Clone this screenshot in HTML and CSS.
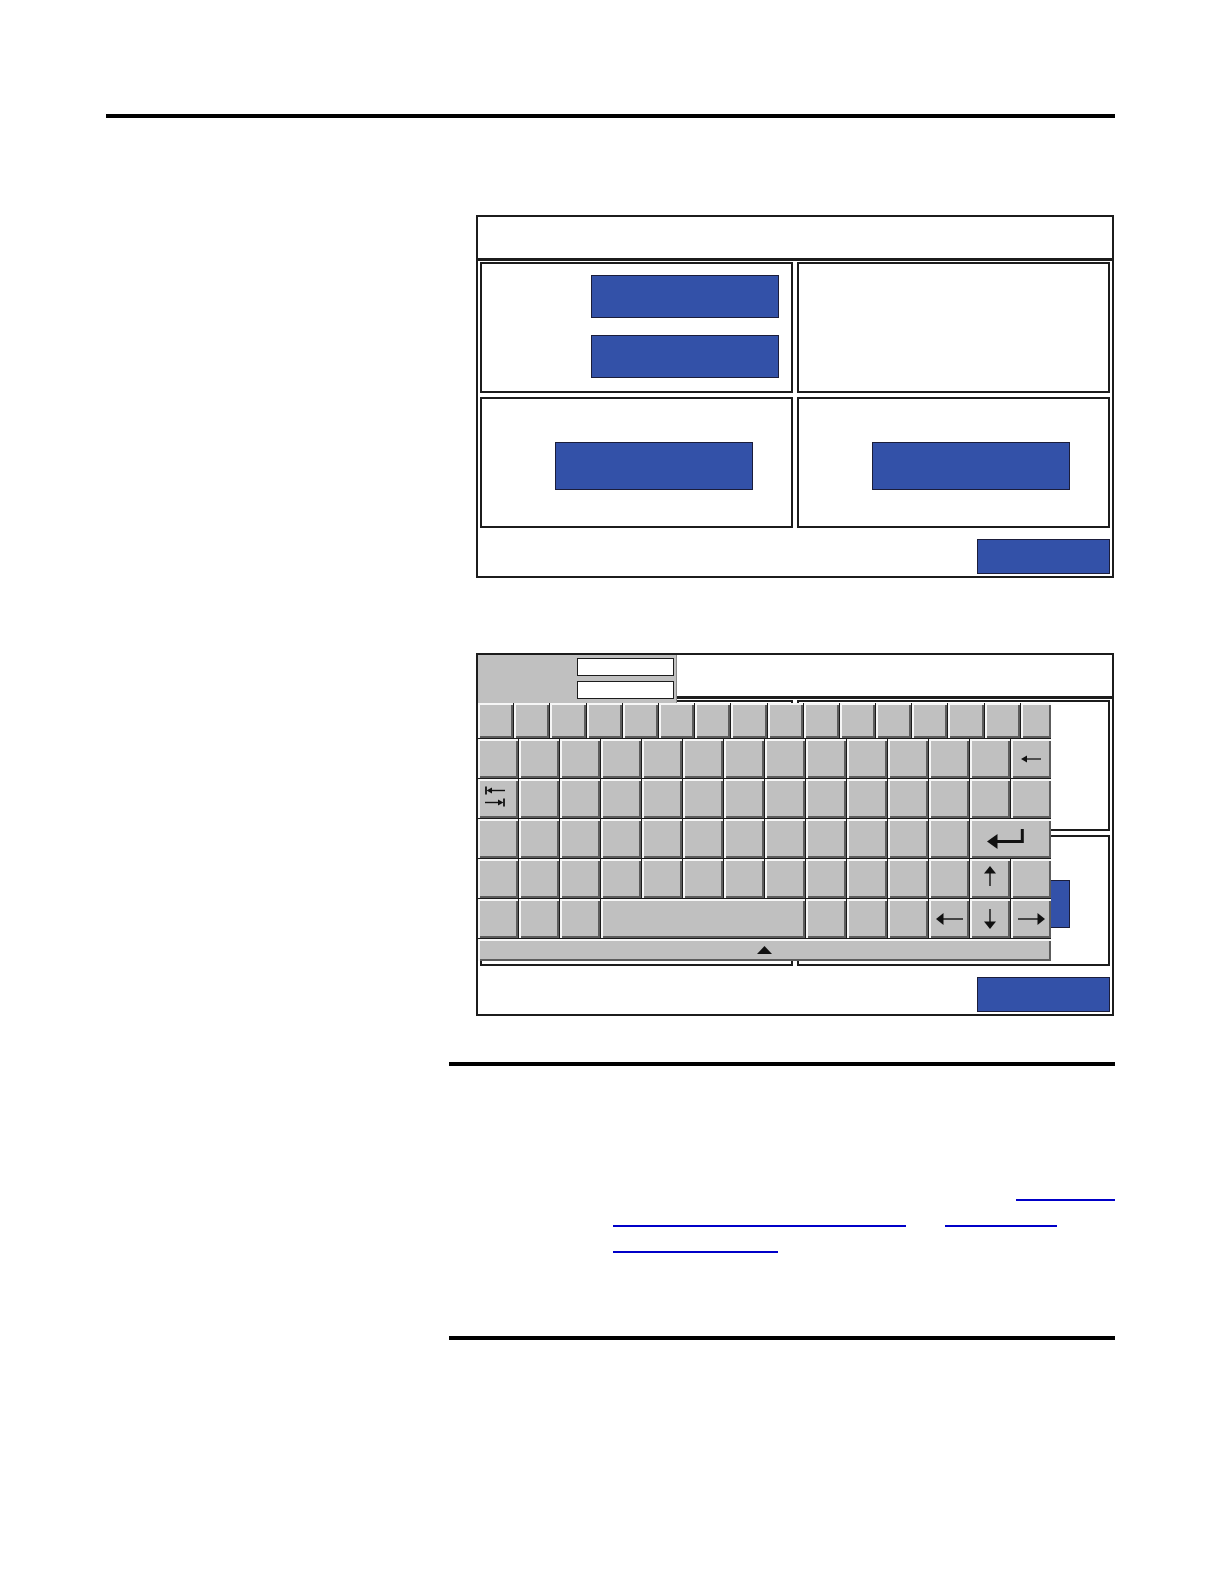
FILE: index.html
```html
<!DOCTYPE html>
<html lang="en">
<head>
<meta charset="utf-8">
<title>Keypad screens</title>
<link rel="stylesheet" href="styles.css">
</head>
<body>
<div class="page">
  <div class="rule rule-top"></div>

  <div class="figs">
    <div class="panel fig1">
      <div class="panel-head"></div>
      <div class="quads">
        <div class="quad q-tl"><div class="btn btn-a"></div><div class="btn btn-a"></div></div>
        <div class="quad q-tr"></div>
        <div class="quad q-bl"><div class="btn btn-b"></div></div>
        <div class="quad q-br"><div class="btn btn-b"></div></div>
      </div>
      <div class="panel-foot"><div class="btn btn-c"></div></div>
    </div>

    <div class="panel fig2">
      <div class="panel-head"></div>
      <div class="quads">
        <div class="quad q-tl"><div class="btn btn-a"></div><div class="btn btn-a"></div></div>
        <div class="quad q-tr"></div>
        <div class="quad q-bl"><div class="btn btn-b"></div></div>
        <div class="quad q-br"><div class="btn btn-b"></div></div>
      </div>
      <div class="panel-foot"><div class="btn btn-c"></div></div>

      <div class="kb-head">
        <div class="kb-input"></div>
        <div class="kb-input"></div>
      </div>

      <div class="kb">
        <div class="kb-row row-top">
          <div class="key"></div><div class="key"></div><div class="key"></div><div class="key"></div>
          <div class="key"></div><div class="key"></div><div class="key"></div><div class="key"></div>
          <div class="key"></div><div class="key"></div><div class="key"></div><div class="key"></div>
          <div class="key"></div><div class="key"></div><div class="key"></div><div class="key"></div>
        </div>
        <div class="kb-row row-main">
          <div class="key"></div><div class="key"></div><div class="key"></div><div class="key"></div>
          <div class="key"></div><div class="key"></div><div class="key"></div><div class="key"></div>
          <div class="key"></div><div class="key"></div><div class="key"></div><div class="key"></div>
          <div class="key"></div>
          <div class="key key-icon">
            <svg width="20" height="8" viewBox="0 0 20 8"><line x1="5" y1="4" x2="20" y2="4" stroke="#111" stroke-width="1.3"/><polygon points="0,4 6,0.6 6,7.4" fill="#111"/></svg>
          </div>
        </div>
        <div class="kb-row row-main">
          <div class="key key-tab">
            <svg width="20" height="21" viewBox="0 0 20 21"><line x1="1" y1="0.5" x2="1" y2="8.5" stroke="#111" stroke-width="1.8"/><polygon points="1.5,4.5 7,1.5 7,7.5" fill="#111"/><line x1="6" y1="4.5" x2="20" y2="4.5" stroke="#111" stroke-width="1.4"/><line x1="0" y1="16.5" x2="14" y2="16.5" stroke="#111" stroke-width="1.4"/><polygon points="18.5,16.5 13,13.5 13,19.5" fill="#111"/><line x1="19" y1="12.5" x2="19" y2="20.5" stroke="#111" stroke-width="1.8"/></svg>
          </div>
          <div class="key"></div><div class="key"></div><div class="key"></div><div class="key"></div>
          <div class="key"></div><div class="key"></div><div class="key"></div><div class="key"></div>
          <div class="key"></div><div class="key"></div><div class="key"></div><div class="key"></div>
          <div class="key"></div>
        </div>
        <div class="kb-row row-main">
          <div class="key"></div><div class="key"></div><div class="key"></div><div class="key"></div>
          <div class="key"></div><div class="key"></div><div class="key"></div><div class="key"></div>
          <div class="key"></div><div class="key"></div><div class="key"></div><div class="key"></div>
          <div class="key key-enter">
            <svg width="37" height="21" viewBox="0 0 37 21"><polyline points="35.3,0 35.3,12.5 8,12.5" fill="none" stroke="#111" stroke-width="3"/><polygon points="0,12.5 10.5,5 10.5,20" fill="#111"/></svg>
          </div>
        </div>
        <div class="kb-row row-main">
          <div class="key"></div><div class="key"></div><div class="key"></div><div class="key"></div>
          <div class="key"></div><div class="key"></div><div class="key"></div><div class="key"></div>
          <div class="key"></div><div class="key"></div><div class="key"></div><div class="key"></div>
          <div class="key key-up">
            <svg width="12" height="20" viewBox="0 0 12 20"><polygon points="6,0 0,7.5 12,7.5" fill="#111"/><line x1="6" y1="6" x2="6" y2="20" stroke="#111" stroke-width="1.4"/></svg>
          </div>
          <div class="key"></div>
        </div>
        <div class="kb-row row-main">
          <div class="key"></div><div class="key"></div><div class="key"></div>
          <div class="key key-space"></div>
          <div class="key"></div><div class="key"></div><div class="key"></div>
          <div class="key key-icon">
            <svg width="27" height="12" viewBox="0 0 27 12"><polygon points="0,6 7.5,0 7.5,12" fill="#111"/><line x1="6" y1="6" x2="27" y2="6" stroke="#111" stroke-width="1.4"/></svg>
          </div>
          <div class="key key-icon">
            <svg width="12" height="20" viewBox="0 0 12 20"><line x1="6" y1="0" x2="6" y2="14" stroke="#111" stroke-width="1.4"/><polygon points="0,12.5 12,12.5 6,20" fill="#111"/></svg>
          </div>
          <div class="key key-icon">
            <svg width="27" height="12" viewBox="0 0 27 12"><line x1="0" y1="6" x2="21" y2="6" stroke="#111" stroke-width="1.4"/><polygon points="27,6 19.5,0 19.5,12" fill="#111"/></svg>
          </div>
        </div>
        <div class="kb-bar">
          <svg width="15" height="8" viewBox="0 0 15 8"><polygon points="7.5,0 15,8 0,8" fill="#111"/></svg>
        </div>
      </div>
    </div>
  </div>

  <div class="rule rule-mid"></div>

  <div class="note">
    <div class="note-line line-end"><a class="xref xref-1" href="#"></a></div>
    <div class="note-line"><a class="xref xref-2" href="#"></a><a class="xref xref-3" href="#"></a></div>
    <div class="note-line"><a class="xref xref-4" href="#"></a></div>
  </div>

  <div class="rule rule-bot"></div>
</div>
</body>
</html>
```

FILE: styles.css
```css
* { box-sizing: border-box; }

body {
  margin: 0;
  background: #ffffff;
  font-family: "Liberation Sans", Arial, sans-serif;
}

.page {
  width: 1224px;
  padding-top: 114px;
  padding-bottom: 40px;
}

.rule {
  height: 4px;
  background: #000000;
}

.rule-top {
  margin-left: 106px;
  width: 1009px;
}

.rule-mid {
  margin-top: 46px;
  margin-left: 449px;
  width: 666px;
}

.rule-bot {
  margin-top: 83px;
  margin-left: 449px;
  width: 666px;
}

.figs {
  margin-left: 476px;
  width: 638px;
}

/* ---------- panel ---------- */
.panel {
  position: relative;
  width: 638px;
  height: 363px;
  border: 2px solid #1c1c1c;
  display: flex;
  flex-direction: column;
  background: #ffffff;
}

.fig1 { margin-top: 97px; }
.fig2 { margin-top: 75px; }

.panel-head {
  height: 44px;
  border-bottom: 3px solid #1c1c1c;
  flex: none;
}

.quads {
  display: grid;
  grid-template-columns: 313px 313px;
  grid-template-rows: 131px 131px;
  column-gap: 4px;
  row-gap: 4px;
  padding: 1px 2px 0 2px;
  flex: none;
}

.quad {
  border: 2px solid #1c1c1c;
  display: flex;
}

.q-tl {
  flex-direction: column;
  align-items: flex-end;
  padding: 11px 12px 0 0;
  gap: 17px;
}

.q-bl, .q-br {
  align-items: flex-start;
  padding: 43px 0 0 73px;
}

.panel-foot {
  flex: 1;
  display: flex;
  justify-content: flex-end;
  align-items: flex-end;
  padding: 0 2px 2px 0;
}

.btn {
  background: #3351a8;
  border: 1px solid #1b1d3a;
}

.btn-a { width: 188px; height: 43px; }
.btn-b { width: 198px; height: 48px; }
.btn-c { width: 133px; height: 35px; }

/* ---------- keyboard overlay ---------- */
.kb-head {
  position: absolute;
  left: 0;
  top: 0;
  width: 199px;
  height: 48px;
  background: #c0c0c0;
  border-right: 1px solid #8a8a8a;
  display: flex;
  flex-direction: column;
  align-items: flex-end;
  padding: 3px 2px 0 0;
  gap: 5px;
}

.kb-input {
  width: 97px;
  height: 18px;
  background: #ffffff;
  border: 1px solid #1c1c1c;
}

.kb {
  position: absolute;
  left: 0;
  top: 48px;
  width: 573px;
  height: 258px;
  background: #1a1a1a;
  display: flex;
  flex-direction: column;
  gap: 1px;
}

.kb-row {
  display: grid;
  column-gap: 1px;
}

.row-top {
  height: 35px;
  grid-template-columns: repeat(15, 35.2px) 1fr;
}

.row-main {
  height: 39px;
  grid-template-columns: repeat(14, 1fr);
}

.key, .kb-bar {
  background: #c0c0c0;
  box-shadow: inset 2px 2px 0 #f6f6f6, inset -2px -2px 0 #5c5c5c;
}

.key-icon {
  display: flex;
  align-items: center;
  justify-content: center;
}

.key-tab {
  display: flex;
  align-items: flex-start;
  justify-content: flex-start;
  padding: 7px 0 0 7px;
}

.key-enter {
  grid-column: span 2;
  display: flex;
  align-items: center;
  justify-content: center;
  padding: 2px 10px 0 0;
}

.key-up {
  display: flex;
  align-items: center;
  justify-content: center;
  padding: 0 0 6px 0;
}

.key-space {
  grid-column: span 5;
}

.kb-bar {
  flex: 1;
  display: flex;
  align-items: center;
  justify-content: center;
}

.key svg, .kb-bar svg { display: block; }

/* ---------- cross references ---------- */
.note {
  margin-top: 109px;
  margin-left: 613px;
  width: 502px;
}

.note-line {
  display: flex;
  height: 26px;
}

.line-end { justify-content: flex-end; }

.xref {
  display: block;
  height: 26px;
  border-bottom: 2px solid #0000c8;
  text-decoration: none;
}

.xref-1 { width: 99px; }
.xref-2 { width: 293px; }
.xref-3 { width: 112px; margin-left: 39px; }
.xref-4 { width: 165px; }
```
